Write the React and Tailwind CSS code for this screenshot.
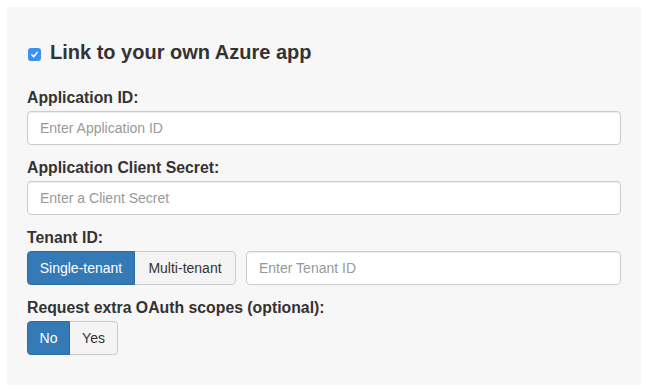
import React from 'react'

const font = { fontFamily: '"Liberation Sans", Arial, Helvetica, sans-serif' }

function Label({ children }) {
  return (
    <div className="text-[15.8px] leading-5 font-bold text-[#333] mb-[3px]">{children}</div>
  )
}

function TextInput({ placeholder, className = '' }) {
  return (
    <input
      type="text"
      placeholder={placeholder}
      className={`h-[34px] w-full px-3 bg-white border border-[#ccc] rounded-[4px] text-[14px] text-[#555] placeholder:text-[#999] shadow-[inset_0_1px_1px_rgba(0,0,0,0.075)] outline-none ${className}`}
    />
  )
}

function Toggle({ options, active, widths }) {
  return (
    <div className="flex shrink-0">
      {options.map((opt, i) => {
        const on = i === active
        const first = i === 0
        const last = i === options.length - 1
        return (
          <button
            key={opt}
            style={{ width: widths[i] }}
            className={`h-[34px] text-[14px] border ${
              on ? 'bg-[#337ab7] border-[#2e6da4] text-white relative z-10' : 'bg-[#f4f4f4] border-[#ccc] text-[#333]'
            } ${first ? 'rounded-l-[4px]' : '-ml-px'} ${last ? 'rounded-r-[4px]' : ''}`}
          >
            {opt}
          </button>
        )
      })}
    </div>
  )
}

export default function App() {
  return (
    <div className="w-[648px] h-[392px] bg-white p-[7px]" style={font}>
      <div className="h-[378px] w-[634px] bg-[#f7f7f7] pl-5 pr-[20px] pt-[34px]">
        {/* Heading with checkbox */}
        <div className="flex items-start gap-[9px]">
          <span className="mt-[7px] ml-px w-[13px] h-[13px] rounded-[3px] bg-[#3b8ff5] flex items-center justify-center">
            <svg width="9" height="9" viewBox="0 0 9 9">
              <path d="M1.8 4.8 L3.7 6.7 L7.3 2.3" stroke="white" strokeWidth="1.5" fill="none" strokeLinecap="round" strokeLinejoin="round" />
            </svg>
          </span>
          <h4 className="text-[20px] leading-[22px] font-bold text-[#333]">Link to your own Azure app</h4>
        </div>

        <div className="mt-[25px]">
          <Label>Application ID:</Label>
          <TextInput placeholder="Enter Application ID" />
        </div>

        <div className="mt-[13px]">
          <Label>Application Client Secret:</Label>
          <TextInput placeholder="Enter a Client Secret" />
        </div>

        <div className="mt-[13px]">
          <Label>Tenant ID:</Label>
          <div className="flex items-center gap-[10px]">
            <Toggle options={['Single-tenant', 'Multi-tenant']} active={0} widths={[108, 102]} />
            <TextInput placeholder="Enter Tenant ID" className="flex-1" />
          </div>
        </div>

        <div className="mt-[13px]">
          <Label>Request extra OAuth scopes (optional):</Label>
          <Toggle options={['No', 'Yes']} active={0} widths={[43, 49]} />
        </div>
      </div>
    </div>
  )
}
